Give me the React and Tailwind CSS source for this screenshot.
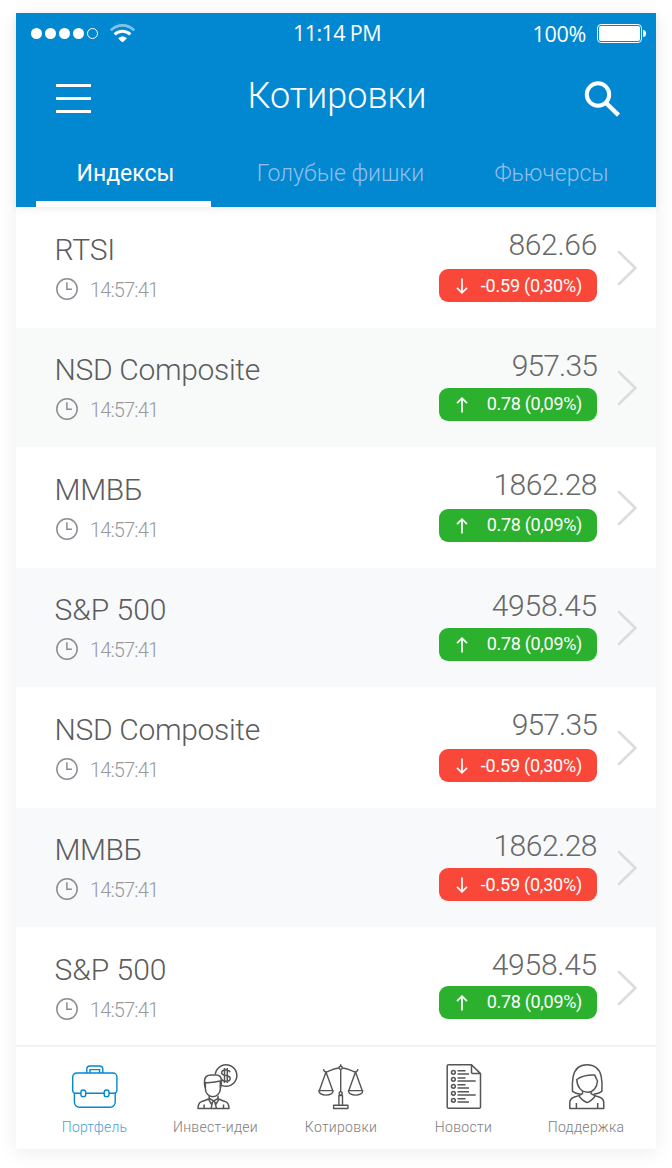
import React, { useState } from 'react';

const tabs = [
  { id: 'indexes', label: 'Индексы', width: 'w-[175px]', text: 'pl-1' },
  { id: 'blue', label: 'Голубые фишки', width: 'w-[259px]', text: '' },
  { id: 'futures', label: 'Фьючерсы', width: 'w-[163px]', text: '' },
];

const quotes = [
  { name: 'RTSI', time: '14:57:41', price: '862.66', change: '-0.59 (0,30%)', up: false, row: 'h-[121px] bg-white', nameText: 'tracking-[-0.2px]', priceText: 'tracking-[-0.3px]' },
  { name: 'NSD Composite', time: '14:57:41', price: '957.35', change: '0.78 (0,09%)', up: true, row: 'h-[119px] bg-[#f7faf9]', nameText: 'tracking-[-0.32px]', priceText: 'tracking-[-0.85px]' },
  { name: 'ММВБ', time: '14:57:41', price: '1862.28', change: '0.78 (0,09%)', up: true, row: 'h-[121px] bg-white', nameText: 'tracking-[-0.3px]', priceText: 'tracking-[-0.5px]' },
  { name: 'S&P 500', time: '14:57:41', price: '4958.45', change: '0.78 (0,09%)', up: true, row: 'h-[119px] bg-[#f7f9fb]', nameText: '', priceText: 'tracking-[-0.25px]' },
  { name: 'NSD Composite', time: '14:57:41', price: '957.35', change: '-0.59 (0,30%)', up: false, row: 'h-[121px] bg-white', nameText: 'tracking-[-0.32px]', priceText: 'tracking-[-0.85px]' },
  { name: 'ММВБ', time: '14:57:41', price: '1862.28', change: '-0.59 (0,30%)', up: false, row: 'h-[119px] bg-[#f7f9fb]', nameText: 'tracking-[-0.4px]', priceText: 'tracking-[-0.5px]' },
  { name: 'S&P 500', time: '14:57:41', price: '4958.45', change: '0.78 (0,09%)', up: true, row: 'h-[118px] bg-white', nameText: '', priceText: 'tracking-[-0.25px]' },
];

function BriefcaseIcon() {
  return (
    <svg width="48" height="48" viewBox="-0.3 0 48 48" fill="none" stroke="currentColor" strokeWidth="1.4">
      <path d="M15.5 11V7.2a3.2 3.2 0 0 1 3.2-3.2h9.6a3.2 3.2 0 0 1 3.2 3.2V11" />
      <path d="M18.7 11V7.6h9.6V11" />
      <path d="M9.5 31.3H4.2a2.8 2.8 0 0 1-2.8-2.8V15a4 4 0 0 1 4-4h36.2a4 4 0 0 1 4 4v13.5a2.8 2.8 0 0 1-2.8 2.8h-5.1M14.6 31.3h18.2" />
      <path d="M3.1 31v9.3a5 5 0 0 0 5 5h30.8a5 5 0 0 0 5-5V31" />
      <rect x="9.6" y="28" width="4.8" height="6.6" rx="2.2" />
      <rect x="32.9" y="28" width="4.8" height="6.6" rx="2.2" />
    </svg>
  );
}

function IdeasIcon() {
  return (
    <svg width="48" height="48" viewBox="-1.7 0 48 48" fill="none" stroke="currentColor" strokeWidth="1.5" strokeLinejoin="round">
      <path d="M19.6 12.4A10.8 10.8 0 1 1 26 23.4" />
      <path d="M34.3 10.2c-.5-1.5-2-2.1-4.2-2.1-2.5 0-4.2 1-4.2 2.7 0 3.9 8.6 1.6 8.6 5.6 0 1.8-1.8 2.8-4.3 2.8s-4.1-.9-4.6-2.5M28.8 6v15M31.6 6v15" />
      <path d="M9.4 25.5c-.6-2-.8-4.5-.6-6.6.3-3.8 2.8-5.8 6.6-5.8h4.8c3.5 0 5.5 2 5.5 5.4 0 2.3-.1 4.7-.7 7" />
      <path d="M9.7 20.6c5 .3 10-.5 14.9-1.6v8.1c0 4.3-3.6 7.7-7.4 7.7s-7.5-3.4-7.5-7.7z" />
      <path d="M13.5 33.7v3c-2 1.3-5.5 2-7.7 2.9-2.7 1.1-3.5 3-3.5 6.9h31c0-3.9-.8-5.8-3.5-6.9-2.2-.9-5.5-1.6-7.5-2.9v-3" />
      <path d="M12.8 37.2l2.7 4.7 2.5-3.2 2.5 3.2 2.8-4.7M13.5 36.5l4.5 2.3 4.4-2.3M16.8 40.2l-1.3 6M19.2 40.2l1.5 6M8.4 42.6v3.7M27.8 42.6v3.7" />
    </svg>
  );
}

function ScalesIcon() {
  return (
    <svg width="48" height="48" viewBox="0.8 0 48 48" fill="none" stroke="currentColor" strokeWidth="1.4" strokeLinejoin="round">
      <path d="M24.5 2.3v1.8M7.2 7.1c.4 1.8 1.3 2.9 2.7 2.9 3.5-1 7.5-3.8 12.9-4M41.8 7.1c-.4 1.8-1.3 2.9-2.7 2.9-3.5-1-7.5-3.8-12.9-4" />
      <circle cx="24.5" cy="5.8" r="1.6" />
      <path d="M9.8 10L3.2 28.5M9.8 10l6.7 18.5M39.3 10l-6.7 18.5M39.3 10L46 28.5" />
      <path d="M2.6 28.6H17c0 2.7-3 4.5-7.2 4.5s-7.2-1.8-7.2-4.5zM32.2 28.6h14.4c0 2.7-3 4.5-7.2 4.5s-7.2-1.8-7.2-4.5z" />
      <path d="M24.5 7.5v22.2" />
      <circle cx="24.5" cy="31.3" r="1.6" />
      <path d="M22.7 43.2v-9.7h3.6v9.7M17.4 43.2h14.3v3.3H17.4z" />
    </svg>
  );
}

function NewsIcon() {
  const rows = [10.3, 17.3, 24.3, 31.3, 38.3];
  return (
    <svg width="48" height="48" viewBox="-4 0 48 48" fill="none" stroke="currentColor" strokeWidth="1.5" strokeLinejoin="round">
      <path d="M27.5 2.7H4.6A1.4 1.4 0 0 0 3.2 4.1v40.8a1.4 1.4 0 0 0 1.4 1.4h30.5a1.4 1.4 0 0 0 1.4-1.4V11.6zv7.5a1.4 1.4 0 0 0 1.4 1.4h7.6" />
      {rows.map((y) => (
        <circle key={y} cx="9.4" cy={y} r="1.9" />
      ))}
      <path d="M13.5 8.7h8M13.5 12h11.5M13.5 15.9h8M13.5 19h18.2M13.5 22.8h8M13.5 26h11.5M13.5 29.7h11.5M13.5 33h18.2M13.5 36.7h8M13.5 40h11.5" />
    </svg>
  );
}

function SupportIcon() {
  return (
    <svg width="48" height="48" viewBox="-1.2 0 48 48" fill="none" stroke="currentColor" strokeWidth="1.5" strokeLinejoin="round">
      <path d="M16.5 32.3c-3-.4-6-1.3-8.2-2.9C7.9 24 8 19 9 14.3 10.6 6.7 16 2.7 22.9 2.7S35.4 6.7 37 14.3c1 4.7 1.1 9.7.7 15.1-2.2 1.6-5.2 2.5-8.2 2.9" />
      <path d="M12.6 17.5c4-3 10.5-4.6 18-4.4l1.5 3.5 1.2 2.4c-.4 6.5-4.3 11.2-9.7 11.2-6.5 0-10.8-5.3-11-12.7z" />
      <path d="M18.3 29.3v2.2c-1.5 1.5-4.5 2.5-8 3.5-3.5 1-4.7 2.7-4.7 6v5.4h34V41c0-3.3-1.2-5-4.7-6-3.5-1-6.5-2-8-3.5v-2.2" />
      <path d="M14.5 33.3c2 3.6 4.8 5.7 8.4 7.3 3.6-1.6 6.3-3.7 8.3-7.3M12.2 41v5.3M33.5 41v5.3" />
    </svg>
  );
}

const navItems = [
  { id: 'portfolio', label: 'Портфель', Icon: BriefcaseIcon, text: 'tracking-[0.2px]' },
  { id: 'ideas', label: 'Инвест-идеи', Icon: IdeasIcon, text: 'tracking-[0.3px] pr-[4px]' },
  { id: 'quotes', label: 'Котировки', Icon: ScalesIcon, text: 'tracking-[0.3px] pl-[1px]' },
  { id: 'news', label: 'Новости', Icon: NewsIcon, text: 'tracking-[0.3px]' },
  { id: 'support', label: 'Поддержка', Icon: SupportIcon, text: 'tracking-[0.3px] pr-[1px]' },
];

function StatusBar() {
  return (
    <div className="flex h-[41px] items-center justify-between pl-[15px] pr-[10px] text-[21.5px] leading-none font-['Open_Sans',sans-serif]">
      <div className="flex w-[180px] items-center">
        <div className="flex gap-[3px]">
          {[0, 1, 2, 3].map((i) => (
            <span key={i} className="size-[11px] rounded-full bg-white" />
          ))}
          <span className="size-[11px] rounded-full border border-white" />
        </div>
        <svg className="ml-3" width="25" height="19" viewBox="0 0 25 19" fill="none" stroke="#fff">
          <path d="M.8 6.2C7.5-.3 17.5-.3 24.2 6.2" strokeWidth="2.6" opacity="0.5" />
          <path d="M4.6 10.4c4.5-4.3 11.3-4.3 15.8 0" strokeWidth="3" />
          <path d="M8.2 14.2c2.5-2.4 6.1-2.4 8.6 0L14 17.3q-1.5 1.5-3 0z" fill="#fff" stroke="none" />
        </svg>
      </div>
      <span className="pr-[3px] pb-[2px] tracking-[-0.6px]">11:14 PM</span>
      <div className="flex w-[180px] items-center justify-end">
        <span className="mr-[11px] tracking-[-0.3px]">100%</span>
        <span className="h-[19px] w-[45px] rounded-[4px] border border-white p-px">
          <span className="block h-full rounded-[2px] bg-white" />
        </span>
        <span className="ml-px h-[7px] w-[3px] rounded-r-full bg-white" />
      </div>
    </div>
  );
}

function QuoteRow({ quote, index, last }) {
  const odd = index % 2 === 0;
  return (
    <div className={`flex items-start pl-[39px] pr-[19px] ${quote.row}`}>
      <div className={`flex-1 ${odd ? 'pt-[28px]' : 'pt-[27px]'}`}>
        <div className={`-ml-[0.5px] text-[30px] leading-none font-light text-[#5c5c5c] ${quote.nameText}`}>
          {quote.name}
        </div>
        <div className="mt-[13px] flex h-[22px] items-center text-[#8b8b92]">
          <svg className="ml-px" width="22" height="22" viewBox="0 0 22 22" fill="none" stroke="currentColor">
            <circle cx="11" cy="11" r="10.2" strokeWidth="1.5" />
            <path d="M10.9 4.3v6.9h5" strokeWidth="1.5" />
          </svg>
          <span className="ml-[12px] pt-[2px] text-[20px] leading-none font-light tracking-[-0.85px] text-[#98989c]">
            {quote.time}
          </span>
        </div>
      </div>
      <div className="flex flex-col items-end pt-[23px]">
        <div className={`text-[30px] leading-none font-light text-[#686868] ${quote.priceText}`}>{quote.price}</div>
        <div
          className={`flex h-[33px] w-[158px] items-center justify-between rounded-[9px] pl-[17px] pr-[15px] text-white ${
            quote.up ? 'bg-[#2cb12e]' : 'bg-[#f94839]'
          } ${odd ? (last ? 'mt-[6px]' : 'mt-[9px]') : 'mt-[7px]'}`}
        >
          <svg width="12" height="16" viewBox="0 0 12 16" fill="none" stroke="currentColor" strokeWidth="1.7">
            {quote.up ? <path d="M6 15.5V1.5M1 6.2l5-5 5 5" /> : <path d="M6 .5v14M1 9.8l5 5 5-5" />}
          </svg>
          <span
            className={`text-[18px] leading-none ${quote.up ? 'pb-[2px] tracking-[-0.32px]' : 'tracking-[-0.22px]'}`}
          >
            {quote.change}
          </span>
        </div>
      </div>
      <svg
        className={`ml-[20px] ${odd ? 'mt-[43px]' : 'mt-[42px]'}`}
        width="20"
        height="36"
        viewBox="0 0 20 36"
        fill="none"
        stroke="#dcdcdc"
        strokeWidth="2.6"
        strokeLinecap="round"
      >
        <path d="M2 2l16.3 16L2 34" />
      </svg>
    </div>
  );
}

export default function App() {
  const [activeTab, setActiveTab] = useState('indexes');
  const [activeNav, setActiveNav] = useState('portfolio');

  return (
    <div className="h-[1168px] w-[672px] overflow-hidden bg-white px-4 pt-[13px] font-[Roboto,sans-serif]">
      <div className="flex h-[1136px] flex-col bg-white shadow-[0_4px_20px_rgba(0,0,0,0.07)]">
        <header className="relative bg-[#0288d1] text-white shadow-[0_2px_8px_rgba(0,0,0,0.07)]">
          <StatusBar />

          <div className="flex h-[89px] items-center justify-between pl-[40px] pr-[35px]">
            <button className="flex w-[35px] flex-col gap-[10px]">
              <span className="h-[3px] w-full bg-white" />
              <span className="h-[3px] w-full bg-white" />
              <span className="h-[3px] w-full bg-white" />
            </button>
            <h1 className="pb-[5px] pr-[1px] text-[36px] leading-none font-light">Котировки</h1>
            <svg width="37" height="36" viewBox="0 0 37 36" fill="none" stroke="#fff">
              <circle cx="14" cy="13.5" r="11.2" strokeWidth="4" />
              <path d="M21.5 21.5l13 12.6" strokeWidth="4.4" />
            </svg>
          </div>

          <nav className="flex h-[64px] px-[20px]">
            {tabs.map((tab) => (
              <button
                key={tab.id}
                onClick={() => setActiveTab(tab.id)}
                className={`border-b-[6px] pt-[3px] text-[23px] leading-none ${tab.width} ${tab.text} ${
                  activeTab === tab.id ? 'border-white' : 'border-transparent font-light text-[#93bfea]'
                }`}
              >
                {tab.label}
              </button>
            ))}
          </nav>
        </header>

        <main>
          {quotes.map((quote, index) => (
            <QuoteRow key={index} quote={quote} index={index} last={index === quotes.length - 1} />
          ))}
        </main>

        <footer className="flex flex-1 border-t-2 border-[#f2f2f2] pl-[17px] pr-[8px] pt-[15px]">
          {navItems.map(({ id, label, Icon, text }) => (
            <button
              key={id}
              onClick={() => setActiveNav(id)}
              className={`flex w-[123px] flex-col items-center ${activeNav === id ? 'text-[#0288d1]' : 'text-[#555]'}`}
            >
              <Icon />
              <span
                className={`mt-[10px] text-[14px] leading-none font-light whitespace-nowrap ${text} ${
                  activeNav === id ? 'text-[#4a9fdc]' : 'text-[#7c7c7c]'
                }`}
              >
                {label}
              </span>
            </button>
          ))}
        </footer>
      </div>
    </div>
  );
}
